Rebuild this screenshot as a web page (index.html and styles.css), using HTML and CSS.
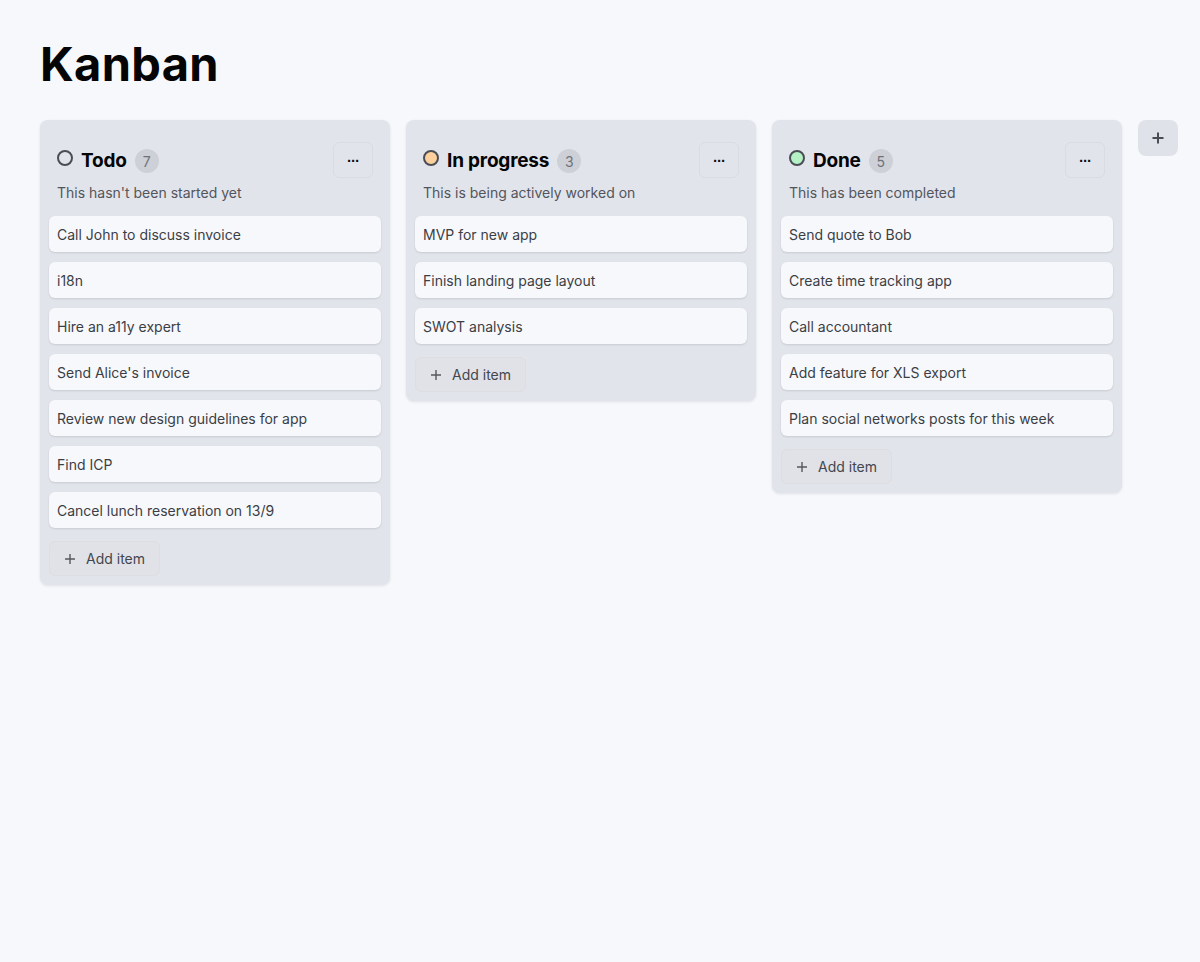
FILE: index.html
```html
<!DOCTYPE html>
<html lang="en">
<head>
    <meta charset="UTF-8">
    <meta name="viewport" content="width=device-width, initial-scale=1.0">
    <title>Kanban</title>
    <link rel="stylesheet" href="styles.css">
</head>
<body>
    <!-- Page title -->
    <h1 class="title">Kanban</h1>

    <div class="board">
        <!-- Todo column -->
        <section class="column">
            <div class="column-header">
                <span class="status status-todo"></span>
                <h2 class="column-title">Todo</h2>
                <span class="count">7</span>
                <button class="menu-btn" type="button">&middot;&middot;&middot;</button>
            </div>
            <p class="column-desc">This hasn't been started yet</p>
            <ul class="cards">
                <li class="card">Call John to discuss invoice</li>
                <li class="card">i18n</li>
                <li class="card">Hire an a11y expert</li>
                <li class="card">Send Alice's invoice</li>
                <li class="card">Review new design guidelines for app</li>
                <li class="card">Find ICP</li>
                <li class="card">Cancel lunch reservation on 13/9</li>
            </ul>
            <button class="add-item" type="button">
                <svg width="12" height="12" viewBox="0 0 12 12"><path d="M6 1v10M1 6h10" stroke="currentColor" stroke-width="1.4" fill="none"/></svg>
                Add item
            </button>
        </section>

        <!-- In progress column -->
        <section class="column">
            <div class="column-header">
                <span class="status status-progress"></span>
                <h2 class="column-title">In progress</h2>
                <span class="count">3</span>
                <button class="menu-btn" type="button">&middot;&middot;&middot;</button>
            </div>
            <p class="column-desc">This is being actively worked on</p>
            <ul class="cards">
                <li class="card">MVP for new app</li>
                <li class="card">Finish landing page layout</li>
                <li class="card">SWOT analysis</li>
            </ul>
            <button class="add-item" type="button">
                <svg width="12" height="12" viewBox="0 0 12 12"><path d="M6 1v10M1 6h10" stroke="currentColor" stroke-width="1.4" fill="none"/></svg>
                Add item
            </button>
        </section>

        <!-- Done column -->
        <section class="column">
            <div class="column-header">
                <span class="status status-done"></span>
                <h2 class="column-title">Done</h2>
                <span class="count">5</span>
                <button class="menu-btn" type="button">&middot;&middot;&middot;</button>
            </div>
            <p class="column-desc">This has been completed</p>
            <ul class="cards">
                <li class="card">Send quote to Bob</li>
                <li class="card">Create time tracking app</li>
                <li class="card">Call accountant</li>
                <li class="card">Add feature for XLS export</li>
                <li class="card">Plan social networks posts for this week</li>
            </ul>
            <button class="add-item" type="button">
                <svg width="12" height="12" viewBox="0 0 12 12"><path d="M6 1v10M1 6h10" stroke="currentColor" stroke-width="1.4" fill="none"/></svg>
                Add item
            </button>
        </section>

        <!-- New column button -->
        <button class="add-column" type="button">
            <svg width="14" height="14" viewBox="0 0 14 14"><path d="M7 1.5v11M1.5 7h11" stroke="currentColor" stroke-width="2" fill="none"/></svg>
        </button>
    </div>
</body>
</html>
```

FILE: styles.css
```css
/* Universal styling */
* {
    box-sizing: border-box;
    margin: 0;
    padding: 0;
}

body {
    background-color: #f7f8fc;
    font-family: 'Inter', 'Roboto', sans-serif;
    color: #3b3e45;
    padding: 36px 40px;
}

/* Page title */
.title {
    font-size: 47px;
    font-weight: 700;
    line-height: 56px;
    color: #050506;
    letter-spacing: 0.3px;
    margin-bottom: 28px;
}

/* Board */
.board {
    display: flex;
    align-items: flex-start;
    gap: 16px;
}

.column {
    flex-shrink: 0;
    width: 350px;
    background-color: #e2e4eb;
    border-radius: 8px;
    padding: 22px 9px 9px 9px;
    box-shadow: 0 1px 3px rgba(20, 25, 40, 0.1);
}

/* Column header */
.column-header {
    display: flex;
    align-items: center;
    height: 36px;
    padding: 0 8px 0 8px;
}

.status {
    width: 16px;
    height: 16px;
    border-radius: 50%;
    border: 2px solid #4a4d55;
    margin-right: 8px;
    margin-top: -4px;
}

.status-todo {
    background-color: transparent;
}

.status-progress {
    background-color: #fdd09d;
}

.status-done {
    background-color: #b5f1c5;
}

.column-title {
    font-size: 19px;
    font-weight: 700;
    color: #050506;
    letter-spacing: -0.2px;
}

.count {
    display: inline-flex;
    align-items: center;
    justify-content: center;
    width: 24px;
    height: 24px;
    border-radius: 50%;
    background-color: #cdd0d7;
    color: #6f727a;
    font-size: 14px;
    margin-left: 8px;
    margin-top: 2px;
}

.menu-btn {
    margin-left: auto;
    width: 40px;
    height: 36px;
    border: 1px solid #dadce3;
    border-radius: 6px;
    background-color: transparent;
    color: #111;
    font-size: 15px;
    font-weight: 700;
    letter-spacing: -1px;
    cursor: pointer;
}

.column-desc {
    font-size: 14px;
    line-height: 20px;
    color: #52555c;
    margin-top: 5px;
    padding-left: 8px;
}

/* Cards */
.cards {
    list-style: none;
    display: flex;
    flex-direction: column;
    gap: 10px;
    margin-top: 13px;
}

.card {
    background-color: #f7f8fb;
    border-radius: 6px;
    height: 36px;
    display: flex;
    align-items: center;
    padding: 0 8px;
    font-size: 14px;
    color: #3b3e45;
    box-shadow: 0 1px 2px rgba(20, 25, 40, 0.12);
}

/* Add item button */
.add-item {
    display: inline-flex;
    align-items: center;
    gap: 10px;
    margin-top: 13px;
    height: 35px;
    padding: 0 14px;
    background-color: #e0e2e8;
    border: 1px solid #dcdee4;
    border-radius: 6px;
    font-family: inherit;
    font-size: 14px;
    color: #43464d;
    cursor: pointer;
}

.add-item svg {
    color: #55585f;
}

/* New column button */
.add-column {
    flex-shrink: 0;
    width: 40px;
    height: 36px;
    border: none;
    border-radius: 8px;
    background-color: #e0e2e9;
    color: #4a4d55;
    display: flex;
    align-items: center;
    justify-content: center;
    cursor: pointer;
}
```
